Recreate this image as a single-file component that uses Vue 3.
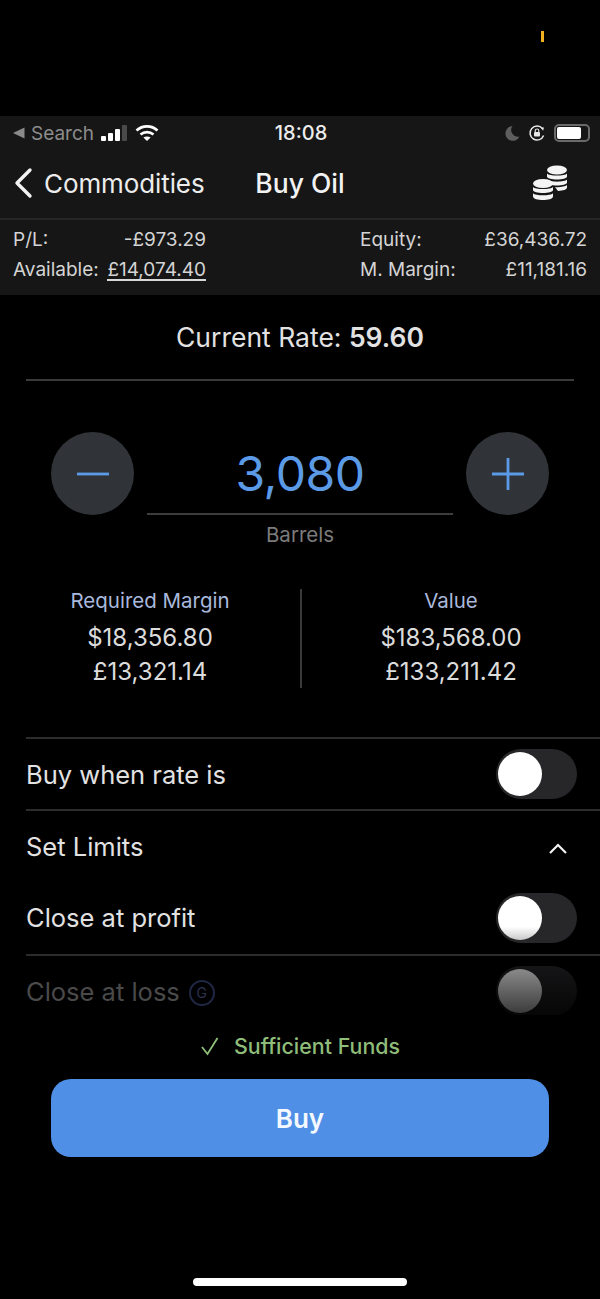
<script setup>
// Buy Oil order ticket, iOS dark theme.
const stats = [
  { label: "P/L:", value: "-£973.29" },
  { label: "Equity:", value: "£36,436.72" },
  { label: "Available:", value: "£14,074.40", link: true },
  { label: "M. Margin:", value: "£11,181.16" },
];
const figures = [
  { title: "Required Margin", usd: "$18,356.80", gbp: "£13,321.14" },
  { title: "Value", usd: "$183,568.00", gbp: "£133,211.42" },
];
</script>

<template>
  <div class="page">
    <div class="notch"><span class="dot" /></div>

    <header class="head">
      <div class="status">
        <div class="st-left">
          <svg class="back-tri" width="14" height="14" viewBox="0 0 14 14"><path d="M12.5 1.5v11L1 7z" fill="#8a8a8a" /></svg>
          <span class="st-search">Search</span>
          <svg class="signal" width="28" height="18" viewBox="0 0 28 18">
            <rect x="0" y="12" width="5" height="5" rx="1" fill="#fff" />
            <rect x="7" y="9" width="5" height="8" rx="1" fill="#fff" />
            <rect x="14" y="5" width="5" height="12" rx="1" fill="#fff" />
            <rect x="21" y="1" width="5" height="16" rx="1" fill="#4a4a4a" />
          </svg>
          <svg class="wifi" width="24" height="18" viewBox="0 0 24 18" fill="none" stroke="#fff" stroke-width="2.6">
            <path d="M1.5 6.500C7.500 1 16.500 1 22.500 6.500" />
            <path d="M5.500 10.500c3.800-3.200 9.200-3.200 13 0" />
            <path d="M12 17l-3.600-3.400c2-1.600 5.200-1.600 7.200 0z" fill="#fff" stroke="none" />
          </svg>
        </div>
        <span class="st-time">18:08</span>
        <div class="st-right">
          <svg width="15" height="16" viewBox="0 0 15 16"><path d="M7.500 1a7.400 7.400 0 1 0 7 10.600A6.800 6.800 0 0 1 7.500 1z" fill="#5e5e5e" /></svg>
          <svg width="18" height="18" viewBox="0 0 18 18" fill="none">
            <path d="M15.600 11.500A7 7 0 1 1 14.500 4.600" stroke="#e8e8e8" stroke-width="1.500" />
            <path d="M12.600 3.400l3.400.2-.9 3.200z" fill="#e8e8e8" />
            <rect x="6" y="8" width="6" height="4.600" rx="1" fill="#e8e8e8" />
            <path d="M7.200 8V6.800a1.800 1.800 0 0 1 3.600 0V8" stroke="#e8e8e8" stroke-width="1.100" />
          </svg>
          <div class="battery"><span class="battery-fill" /></div>
        </div>
      </div>

      <nav class="nav">
        <div class="nav-back">
          <svg width="20" height="32" viewBox="0 0 20 32" fill="none"><path d="M17 3L4 16l13 13" stroke="#f2f2f2" stroke-width="3.400" stroke-linecap="round" stroke-linejoin="round" /></svg>
          <span>Commodities</span>
        </div>
        <h1 class="nav-title">Buy Oil</h1>
        <svg class="coins" width="36" height="38" viewBox="0 0 36 38">
          <g fill="#f4f4f4">
            <ellipse cx="25" cy="6" rx="10" ry="4.600" />
            <path d="M15 9.500c2 2.800 18 2.800 20 0v3c0 4-20 4-20 0z" />
            <path d="M15 15.600c2 2.800 18 2.800 20 0v3c0 4-20 4-20 0z" />
            <path d="M23 23c4 .6 10-.4 12-2v2.600c0 2-4 3.200-9 3.400z" />
            <ellipse cx="11" cy="19.500" rx="10" ry="4.600" />
            <path d="M1 23c2 2.800 18 2.800 20 0v3c0 4-20 4-20 0z" />
            <path d="M1 29.200c2 2.800 18 2.800 20 0v3.300c0 4.700-20 4.700-20 0z" />
          </g>
        </svg>
      </nav>

      <div class="stats">
        <div v-for="s in stats" :key="s.label" class="stat">
          <span>{{ s.label }}</span>
          <span :class="{ under: s.link }">{{ s.value }}</span>
        </div>
      </div>
    </header>

    <main class="body">
      <div class="rate">Current Rate: <b>59.60</b></div>

      <section class="qty">
        <div class="round">
          <svg width="34" height="34" viewBox="0 0 34 34"><path d="M1 17h32" stroke="#5b9ae6" stroke-width="2.800" /></svg>
        </div>
        <div class="qty-mid">
          <div class="qty-num">3,080</div>
          <div class="qty-unit">Barrels</div>
        </div>
        <div class="round">
          <svg width="34" height="34" viewBox="0 0 34 34"><path d="M1 17h32M17 1v32" stroke="#5b9ae6" stroke-width="2.800" /></svg>
        </div>
      </section>

      <section class="figs">
        <div v-for="f in figures" :key="f.title" class="fig">
          <div class="fig-title">{{ f.title }}</div>
          <div class="fig-val">{{ f.usd }}</div>
          <div class="fig-val">{{ f.gbp }}</div>
        </div>
      </section>

      <section class="rows">
        <div class="row">
          <span>Buy when rate is</span>
          <span class="toggle"><i /></span>
        </div>
        <div class="row">
          <span>Set Limits</span>
          <svg class="chev" width="20" height="14" viewBox="0 0 20 14" fill="none"><path d="M2 12l8-8 8 8" stroke="#f2f2f2" stroke-width="2.200" /></svg>
        </div>
        <div class="row plain">
          <span>Close at profit</span>
          <span class="toggle"><i class="shade" /></span>
        </div>
        <div class="row faded">
          <span class="loss">Close at loss
            <span class="g-badge">G</span>
          </span>
          <span class="toggle dim"><i /></span>
        </div>
      </section>
    </main>

    <div class="funds">
      <svg width="20" height="20" viewBox="0 0 20 20" fill="none"><path d="M2 11l5.500 7L17.500 2" stroke="#8fc07a" stroke-width="1.800" /></svg>
      <span>Sufficient Funds</span>
    </div>
    <button class="buy">Buy</button>
    <div class="home"><span /></div>
  </div>
</template>

<style>
body {
  margin: 0;
  background: #000;
}
</style>

<style scoped>
.page {
  width: 600px;
  height: 1299px;
  overflow: hidden;
  background: #000;
  color: #e6e6e6;
  font-family: Inter, "Liberation Sans", sans-serif;
}
.notch {
  height: 116px;
  position: relative;
}
.dot {
  position: absolute;
  left: 541px;
  top: 31px;
  width: 3px;
  height: 11px;
  background: #f2b01e;
}
.head {
  background: #161616;
  height: 179px;
}
.status {
  height: 34px;
  display: grid;
  grid-template-columns: 1fr auto 1fr;
  align-items: center;
  padding: 0 10px 0 12px;
}
.st-left {
  display: flex;
  align-items: center;
}
.st-search {
  margin-left: 5px;
  font-size: 19px;
  color: #8c8c8c;
}
.signal {
  margin-left: 7px;
}
.wifi {
  margin-left: 6px;
}
.st-time {
  font-size: 20px;
  font-weight: 500;
  line-height: 32px;
  color: #ececec;
}
.st-right {
  display: flex;
  align-items: center;
  justify-content: flex-end;
  gap: 8px;
}
.battery {
  width: 36px;
  height: 18px;
  box-sizing: border-box;
  border: 2px solid #6a6a6a;
  border-radius: 5px;
  padding: 1px 7px 1px 1px;
}
.battery-fill {
  display: block;
  height: 100%;
  background: #fff;
  border-radius: 2px;
}
.nav {
  height: 70px;
  padding: 0 32px 2px 13px;
  border-bottom: 2px solid #262626;
  box-sizing: border-box;
  position: relative;
  display: flex;
  align-items: center;
  justify-content: space-between;
}
.nav-back {
  display: flex;
  align-items: center;
  gap: 11px;
  font-size: 26px;
  letter-spacing: -0.1px;
  color: #ececec;
}
.nav-title {
  position: absolute;
  left: 0;
  right: 0;
  margin: 0;
  text-align: center;
  font-size: 26.500px;
  font-weight: 500;
  color: #f2f2f2;
}
.coins {
  position: relative;
}
.stats {
  display: grid;
  grid-template-columns: 193px 227px;
  justify-content: space-between;
  row-gap: 8px;
  padding: 9px 13px 0;
  font-size: 19px;
  line-height: 22px;
  color: #d4d4d4;
}
.stat {
  display: flex;
  justify-content: space-between;
}
.under {
  border-bottom: 2px solid #d8d8d8;
  height: 20px;
}
.body {
  height: 720px;
  overflow: hidden;
}
.rate {
  margin: 0 26px;
  height: 86px;
  box-sizing: border-box;
  border-bottom: 2px solid #3a3a3a;
  padding-top: 26px;
  text-align: center;
  font-size: 26.500px;
  line-height: 33px;
  color: #e2e2e2;
}
.rate b {
  font-weight: 600;
}
.qty {
  display: flex;
  justify-content: center;
  gap: 13px;
  margin-top: 51px;
  height: 122px;
}
.round {
  width: 83px;
  height: 83px;
  border-radius: 50%;
  background: #303439;
  display: flex;
  align-items: center;
  justify-content: center;
}
.qty-mid {
  width: 306px;
  text-align: center;
}
.qty-num {
  height: 83px;
  box-sizing: border-box;
  border-bottom: 2px solid #3d3d3d;
  font-size: 48px;
  line-height: 83px;
  letter-spacing: -0.5px;
  color: #5b9ae6;
}
.qty-unit {
  margin-top: 8px;
  font-size: 20.500px;
  line-height: 24px;
  color: #7c7c7c;
}
.figs {
  display: grid;
  grid-template-columns: 302px 298px;
  margin-top: 35px;
  height: 95px;
}
.fig {
  text-align: center;
  white-space: nowrap;
  display: flex;
  flex-direction: column;
  align-items: center;
  font-size: 24px;
  line-height: 33.500px;
  color: #dcdcdc;
}
.fig:first-child {
  border-right: 2px solid #3a3a3a;
}
.fig-title {
  font-size: 20.500px;
  line-height: 24px;
  margin-bottom: 8px;
  color: #a9b9dc;
}
.rows {
  margin: 53px 0 0 26px;
}
.row {
  height: 72.400px;
  box-sizing: border-box;
  border-top: 2px solid #2c2c2c;
  display: flex;
  align-items: center;
  justify-content: space-between;
  padding-right: 23px;
  font-size: 25.500px;
  color: #e2e2e2;
}
.row.plain {
  border-top: 0;
}
.row.faded {
  color: #4a4a4a;
}
.loss {
  display: flex;
  align-items: center;
  gap: 9px;
}
.g-badge {
  width: 26px;
  height: 26px;
  box-sizing: border-box;
  border: 2px solid #1f2744;
  border-radius: 50%;
  margin-top: 3px;
  display: flex;
  align-items: center;
  justify-content: center;
  font-size: 14px;
  color: #2c3350;
}
.toggle {
  width: 81px;
  height: 50px;
  border-radius: 25px;
  background: #27272a;
  display: flex;
  align-items: center;
  padding-left: 2px;
  box-sizing: border-box;
}
.toggle i {
  width: 44px;
  height: 44px;
  border-radius: 50%;
  background: #fff;
}
.toggle i.shade {
  background: linear-gradient(#fff 70%, #c8c8c8);
}
.toggle.dim {
  background: linear-gradient(#151517, #060606);
}
.toggle.dim i {
  background: linear-gradient(#8a8a8a, #3c3c3c);
}
.chev {
  margin-right: 9px;
  margin-top: 2px;
}
.funds {
  height: 43px;
  margin-top: 9px;
  display: flex;
  align-items: center;
  justify-content: center;
  gap: 14px;
  font-size: 21.400px;
  font-weight: 500;
  color: #8fbd7a;
}
.buy {
  display: block;
  width: 498px;
  height: 78px;
  margin: 12px auto 0;
  border: 0;
  border-radius: 20px;
  background: #4f90e6;
  color: #f4f8ff;
  font-family: inherit;
  font-size: 26px;
  font-weight: 600;
}
.home {
  margin-top: 121px;
  display: flex;
  justify-content: center;
}
.home span {
  width: 214px;
  height: 8px;
  border-radius: 4px;
  background: #fff;
}
</style>
